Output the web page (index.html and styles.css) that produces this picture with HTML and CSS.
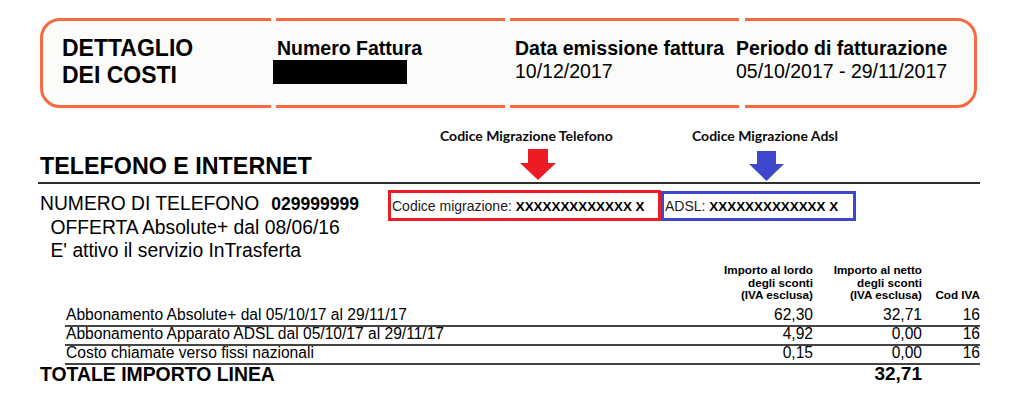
FILE: index.html
```html
<!DOCTYPE html>
<html lang="it">
<head>
<meta charset="utf-8">
<title>Dettaglio dei costi</title>
<link rel="stylesheet" href="styles.css">
</head>
<body>
<div class="page">
  <div class="summary">
    <div class="summary-title">DETTAGLIO<br>DEI COSTI</div>
    <div class="summary-col">
      <div class="summary-label">Numero Fattura</div>
      <div class="redacted"></div>
    </div>
    <div class="summary-col">
      <div class="summary-label">Data emissione fattura</div>
      <div class="summary-value">10/12/2017</div>
    </div>
    <div class="summary-col">
      <div class="summary-label">Periodo di fatturazione</div>
      <div class="summary-value">05/10/2017 - 29/11/2017</div>
    </div>
    <span class="gap gap-1"></span>
    <span class="gap gap-2"></span>
    <span class="gap gap-3"></span>
  </div>

  <section class="line-section">
    <div class="annotation annotation-tel">Codice Migrazione Telefono</div>
    <svg class="arrow arrow-red" width="36" height="31" viewBox="0 0 36 31"><polygon points="8,0 28,0 28,14 36,14 18,31 0,14 8,14"/></svg>
    <div class="annotation annotation-adsl">Codice Migrazione Adsl</div>
    <svg class="arrow arrow-blue" width="35" height="30" viewBox="0 0 35 30"><polygon points="8,0 27,0 27,13 35,13 17.5,30 0,13 8,13"/></svg>

    <h2 class="section-title">TELEFONO E INTERNET</h2>

    <div class="phone">
      <div class="phone-info">
        <div class="phone-number">NUMERO DI TELEFONO<b>029999999</b></div>
        <div class="phone-sub">OFFERTA Absolute+ dal 08/06/16</div>
        <div class="phone-sub">E' attivo il servizio InTrasferta</div>
      </div>
      <div class="code code-red">Codice migrazione: <b>XXXXXXXXXXXXX X</b></div>
      <div class="code code-blue">ADSL: <b>XXXXXXXXXXXXX X</b></div>
    </div>

    <div class="charges">
      <div class="charges-head">
        <div></div>
        <div class="num">Importo al lordo<br>degli sconti<br>(IVA esclusa)</div>
        <div class="num">Importo al netto<br>degli sconti<br>(IVA esclusa)</div>
        <div class="num cod-head">Cod IVA</div>
      </div>
      <div class="charge-row">
        <div class="desc">Abbonamento Absolute+ dal 05/10/17 al 29/11/17</div>
        <div class="num">62,30</div>
        <div class="num">32,71</div>
        <div class="num">16</div>
      </div>
      <div class="charge-row">
        <div class="desc">Abbonamento Apparato ADSL dal 05/10/17 al 29/11/17</div>
        <div class="num">4,92</div>
        <div class="num">0,00</div>
        <div class="num">16</div>
      </div>
      <div class="charge-row">
        <div class="desc">Costo chiamate verso fissi nazionali</div>
        <div class="num">0,15</div>
        <div class="num">0,00</div>
        <div class="num">16</div>
      </div>
    </div>

    <div class="total">
      <div class="total-label">TOTALE IMPORTO LINEA</div>
      <div class="total-value">32,71</div>
      <div></div>
    </div>
  </section>
</div>
</body>
</html>
```

FILE: styles.css
```css
html, body {
  margin: 0;
  padding: 0;
  background: #ffffff;
}

body {
  font-family: "Liberation Sans", Arial, sans-serif;
  color: #000;
}

.page {
  width: 940px;
  padding: 18px 0 0 40px;
}

/* ---------- summary box ---------- */
.summary {
  position: relative;
  box-sizing: border-box;
  width: 937px;
  height: 90px;
  border: 3px solid #f9693f;
  border-radius: 20px;
  background: #fbfcfa;
  display: grid;
  grid-template-columns: 215px 238px 221px 1fr;
  padding: 14px 0 0 19px;
}

.summary-title {
  font-size: 23px;
  font-weight: bold;
  line-height: 26.5px;
}

.summary-col {
  margin-top: 2px;
}

.summary-label {
  font-size: 19.5px;
  font-weight: bold;
  line-height: 23px;
  white-space: nowrap;
}

.summary-value {
  font-size: 19.5px;
  line-height: 23px;
  white-space: nowrap;
}

.redacted {
  width: 134px;
  height: 24px;
  margin-left: -4px;
  background: #000;
}

.gap {
  position: absolute;
  top: -3px;
  bottom: -3px;
  width: 5px;
  border-top: 3px solid #ffffff;
  border-bottom: 3px solid #ffffff;
}

.gap-1 { left: 228px; }
.gap-2 { left: 462px; }
.gap-3 { left: 696px; width: 6px; }

/* ---------- section ---------- */
.line-section {
  position: relative;
  padding-top: 45.4px;
}

.annotation {
  position: absolute;
  font-family: Lato, "Open Sans", sans-serif;
  font-weight: bold;
  font-size: 14px;
  line-height: 14px;
  top: 21.3px;
  white-space: nowrap;
  color: #0a0a0a;
}

.annotation-tel { left: 400px; }
.annotation-adsl { left: 652px; }

.arrow {
  position: absolute;
  display: block;
}

.arrow-red {
  left: 480px;
  top: 41.3px;
  fill: #ed1c24;
}

.arrow-blue {
  left: 709px;
  top: 43px;
  fill: #3f48cc;
}

.section-title {
  margin: 0 0 0 -2px;
  padding: 0 0 2px 2px;
  font-size: 23.3px;
  font-weight: bold;
  line-height: 27px;
  border-bottom: 2px solid #2e2e2e;
}

/* ---------- phone block ---------- */
.phone {
  display: flex;
  align-items: flex-start;
}

.phone-info {
  width: 348px;
  margin-top: 8px;
  font-size: 19.3px;
  line-height: 23px;
  white-space: nowrap;
}

.phone-number b {
  font-size: 17.5px;
  margin-left: 12px;
}

.phone-sub {
  padding-left: 10.5px;
}

.code {
  box-sizing: border-box;
  border: 3px solid;
  font-size: 14px;
  padding-left: 1px;
  white-space: nowrap;
  color: #1a1a1a;
}

.code b {
  font-size: 13.4px;
  color: #000;
}

.code-red {
  width: 273px;
  height: 31px;
  margin-top: 6px;
  border-color: #ed1c24;
  line-height: 25px;
  padding-top: 1px;
}

.code-blue {
  width: 195px;
  height: 30px;
  margin-top: 7px;
  border-color: #3f48cc;
  line-height: 24px;
}

/* ---------- charges ---------- */
.charges {
  margin: 1.7px 0 0 25px;
  width: 915px;
}

.charges-head,
.charge-row {
  display: grid;
  grid-template-columns: 1fr 110px 109px 58px;
}

.charges-head {
  font-size: 11.7px;
  font-weight: bold;
  line-height: 12.5px;
  margin-bottom: 6.5px;
  white-space: nowrap;
}

.cod-head {
  align-self: end;
}

.num {
  text-align: right;
}

.charge-row {
  font-size: 15.6px;
  line-height: 13px;
  padding-bottom: 4px;
  border-bottom: 2px solid #444;
  white-space: nowrap;
}

.desc {
  padding-left: 1px;
}

/* ---------- total ---------- */
.total {
  display: grid;
  grid-template-columns: 1fr 109px 58px;
  font-weight: bold;
  line-height: 18px;
}

.total-label {
  font-size: 19.4px;
  white-space: nowrap;
}

.total-value {
  font-size: 19px;
  text-align: right;
}
```
